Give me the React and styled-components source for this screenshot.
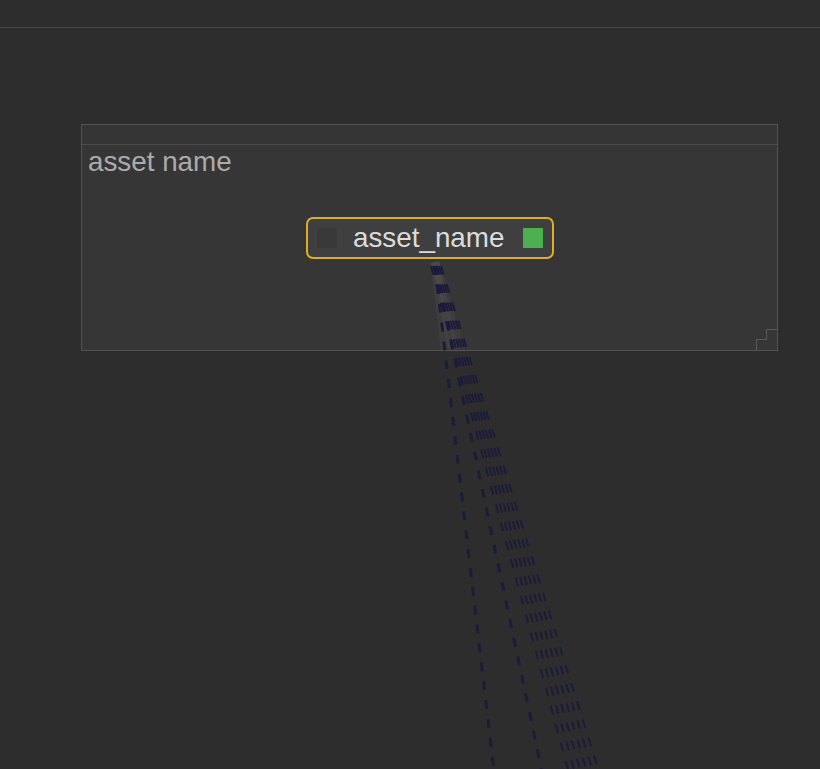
import React from 'react';
import styled, { createGlobalStyle } from 'styled-components';

const GlobalStyle = createGlobalStyle`
  html, body {
    margin: 0;
    padding: 0;
    background: #2d2d2d;
  }
  body {
    font-family: "Liberation Sans", Arial, sans-serif;
  }
`;

const Canvas = styled.div`
  position: relative;
  width: 820px;
  height: 769px;
  overflow: hidden;
  background: #2d2d2d;
`;

const TopBar = styled.div`
  height: 27px;
  border-bottom: 1px solid #464646;
  background: #2d2d2d;
`;

const Group = styled.div`
  position: absolute;
  left: 81px;
  top: 124px;
  width: 695px;
  height: 225px;
  border: 1px solid #525252;
  background: #363636;
  display: flex;
  flex-direction: column;
`;

const GroupHeader = styled.div`
  height: 19px;
  border-bottom: 1px solid #4c4c4c;
  background: #353535;
`;

const GroupTitle = styled.div`
  padding: 1px 0 0 6px;
  font-size: 27.8px;
  line-height: 32px;
  color: #ababab;
`;

const Resize = styled.svg`
  position: absolute;
  right: 0;
  bottom: 0;
`;

const Links = styled.svg`
  position: absolute;
  left: 0;
  top: 0;
`;

const Node = styled.div`
  position: absolute;
  left: ${p => p.x}px;
  top: ${p => p.y}px;
  box-sizing: border-box;
  width: 248px;
  height: 42px;
  border: 2px solid #e0ad28;
  border-radius: 7px;
  background: #3f3f3f;
  display: flex;
  align-items: center;
  padding: 0 9px;
  gap: 16px;
`;

const Slot = styled.div`
  width: 20px;
  height: 20px;
  flex: none;
  background: ${p => p.color};
`;

const NodeLabel = styled.span`
  flex: 1;
  font-size: 27.8px;
  line-height: 32px;
  color: #dcdcdc;
  white-space: nowrap;
`;

const origin = { x: 435, y: 262 };
const H = 769;

const singles = [0.116, 0.21];
// fan of overlapping links, spreading slightly as they go down
const bundle = [0, 1, 2, 3, 4, 5].map(i => ({
  x: 431 + i * 2,
  s: 0.27 + i * 0.008,
}));

const endX = (x, s) => x + (H - origin.y) * s;

export default function App() {
  return (
    <Canvas>
      <GlobalStyle />
      <TopBar />
      <Group>
        <GroupHeader />
        <GroupTitle>asset name</GroupTitle>
        <Resize width="21" height="21" viewBox="0 0 21 21">
          <path
            d="M0.5 21 V10.5 H10.5 V0.5 H21"
            fill="none"
            stroke="#5a5a5a"
            strokeWidth="1"
          />
        </Resize>
      </Group>
      <Links width="820" height="769">
        <defs>
          <clipPath id="grp">
            <rect x="82" y="145" width="694" height="204" />
          </clipPath>
        </defs>
        <g clipPath="url(#grp)" stroke="rgba(255,255,255,0.035)" strokeWidth="9" fill="none">
          {[...singles, 0.29].map(s => (
            <path key={s} d={`M${origin.x},${origin.y} L${endX(origin.x, s)},${H}`} />
          ))}
        </g>
        <g stroke="#1c1c3a" fill="none" strokeDasharray="9 10">
          {singles.map(s => (
            <path
              key={s}
              strokeWidth="3"
              d={`M${origin.x},${origin.y + 4} L${endX(origin.x, s)},${H}`}
            />
          ))}
          {bundle.map(b => (
            <path
              key={b.x}
              strokeWidth="2"
              d={`M${b.x},${origin.y + 4} L${endX(b.x, b.s)},${H}`}
            />
          ))}
        </g>
      </Links>
      <Node x={306} y={217}>
        <Slot color="#393939" />
        <NodeLabel>asset_name</NodeLabel>
        <Slot color="#4caf50" />
      </Node>
    </Canvas>
  );
}
